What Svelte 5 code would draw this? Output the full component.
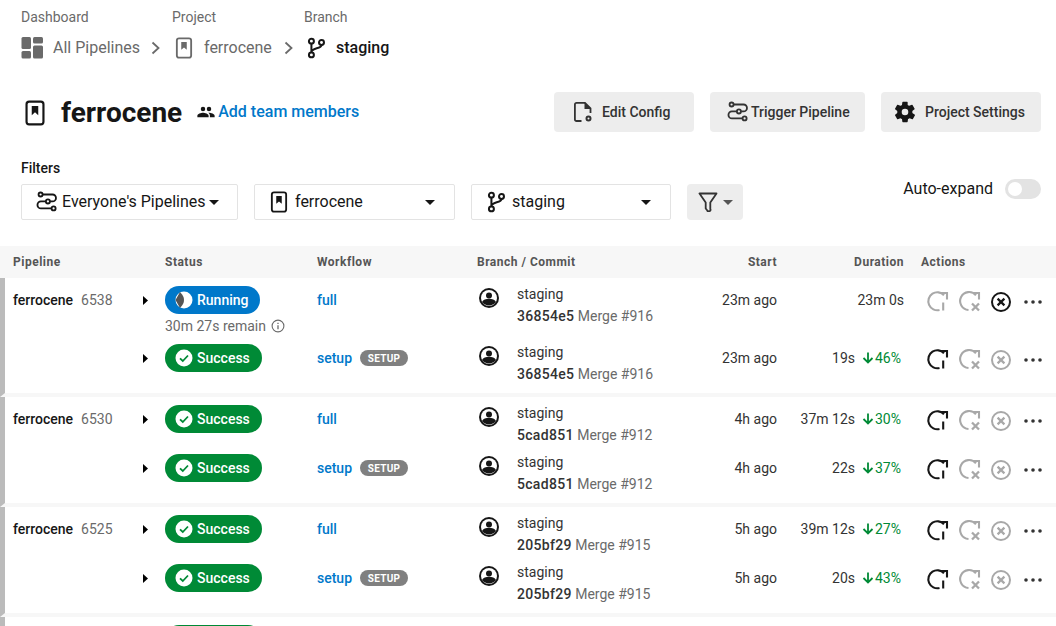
<script>
  const groups = [
    { project: 'ferrocene', num: 6538, rows: [
      { status: 'running', wf: 'full', sha: '36854e5', msg: 'Merge #916', start: '23m ago', dur: '23m 0s', pct: '', remain: '30m 27s remain' },
      { status: 'success', wf: 'setup', sha: '36854e5', msg: 'Merge #916', start: '23m ago', dur: '19s', pct: '46%' }
    ]},
    { project: 'ferrocene', num: 6530, rows: [
      { status: 'success', wf: 'full', sha: '5cad851', msg: 'Merge #912', start: '4h ago', dur: '37m 12s', pct: '30%' },
      { status: 'success', wf: 'setup', sha: '5cad851', msg: 'Merge #912', start: '4h ago', dur: '22s', pct: '37%' }
    ]},
    { project: 'ferrocene', num: 6525, rows: [
      { status: 'success', wf: 'full', sha: '205bf29', msg: 'Merge #915', start: '5h ago', dur: '39m 12s', pct: '27%' },
      { status: 'success', wf: 'setup', sha: '205bf29', msg: 'Merge #915', start: '5h ago', dur: '20s', pct: '43%' }
    ]},
    // next pipeline, only the top of its pill is in view
    { project: '', num: 0, rows: [
      { status: 'clipped', wf: '', sha: '', msg: '', start: '', dur: '', pct: '' }
    ]}
  ];
</script>

{#snippet bookmark(size, color)}
  <svg width={size} height={size} viewBox="0 0 24 24" fill="none">
    <rect x="4.2" y="1.5" width="15.6" height="21" rx="2.4" stroke={color} stroke-width="2"/>
    <path d="M9 5.5h6v8.5l-3-2.6-3 2.6z" fill={color}/>
  </svg>
{/snippet}

{#snippet branch(size, color)}
  <svg width={size} height={size} viewBox="0 0 24 24" fill="none" stroke={color} stroke-width="2.2">
    <circle cx="7" cy="4.5" r="2.7"/>
    <circle cx="7" cy="19.5" r="2.7"/>
    <circle cx="18" cy="6" r="2.7"/>
    <path d="M7 7.2v9.6M18 8.700c0 4.300-11 3-11 8"/>
  </svg>
{/snippet}

{#snippet flow(size, color)}
  <svg width={size} height={size} viewBox="0 0 24 24" fill="none" stroke={color} stroke-width="2">
    <circle cx="5" cy="3.8" r="2.2"/>
    <path d="M7.2 3.8H18a3.600 3.600 0 0 1 0 7.600h-2.600"/>
    <circle cx="13" cy="11.4" r="2.2"/>
    <path d="M10.800 11.400H5.400a3.600 3.600 0 0 0 0 7.600H17"/>
    <circle cx="19.2" cy="19" r="2.2"/>
  </svg>
{/snippet}

{#snippet caret(color)}
  <svg class="caret" width="10" height="5" viewBox="0 0 10 5"><path d="M0 0h10L5 5z" fill={color}/></svg>
{/snippet}

{#snippet rerun(color)}
  <svg width="24" height="24" viewBox="0 0 24 24" fill="none" stroke={color} stroke-width="2.100">
    <path d="M18 5.200A9 9 0 1 0 13.500 20"/>
    <path d="M15 3h6v6.500"/>
    <path d="M17.200 12.500V20.500"/>
  </svg>
{/snippet}

{#snippet rerunFailed(color)}
  <svg width="24" height="24" viewBox="0 0 24 24" fill="none" stroke={color} stroke-width="2.100">
    <path d="M18 5.200A9 9 0 1 0 10.500 20"/>
    <path d="M15 3h6v6.500"/>
    <path d="M14 13.500l7 7M21 13.500l-7 7" stroke-width="2.300"/>
  </svg>
{/snippet}

{#snippet cancel(color)}
  <svg width="22" height="22" viewBox="0 0 22 22" fill="none" stroke={color} stroke-width="2">
    <circle cx="11" cy="11" r="9"/>
    <path d="M7.600 7.600l6.800 6.800M14.400 7.600l-6.800 6.800" stroke-width="2.200"/>
  </svg>
{/snippet}

<div class="page">
  <nav class="crumbs">
    <div class="crumb c1">
      <span class="crumb-label">Dashboard</span>
      <span class="crumb-value">
        <svg width="22" height="22" viewBox="0 0 22 22" fill="#6a6a6a">
          <rect x="0.5" y="0" width="9.5" height="12" rx="1.5"/>
          <rect x="12" y="0" width="10" height="6.5" rx="1.5"/>
          <rect x="0.5" y="14" width="9.5" height="7.5" rx="1.5"/>
          <rect x="12" y="8.5" width="10" height="13" rx="1.5"/>
        </svg>
        All Pipelines
      </span>
    </div>
    <svg class="chev" width="10" height="14" viewBox="0 0 10 14" fill="none" stroke="#6a6a6a" stroke-width="1.8"><path d="M1.500 1.500l6 5.500-6 5.500"/></svg>
    <div class="crumb c2">
      <span class="crumb-label">Project</span>
      <span class="crumb-value">{@render bookmark(22, '#6a6a6a')}<span>ferrocene</span></span>
    </div>
    <svg class="chev" width="10" height="14" viewBox="0 0 10 14" fill="none" stroke="#6a6a6a" stroke-width="1.8"><path d="M1.500 1.500l6 5.500-6 5.500"/></svg>
    <div class="crumb c3">
      <span class="crumb-label">Branch</span>
      <span class="crumb-value cur">{@render branch(22, '#161616')}<span>staging</span></span>
    </div>
  </nav>

  <header class="head">
    <div class="title-box">
      {@render bookmark(26, '#161616')}
      <h1>ferrocene</h1>
      <a class="team" href="#team">
        <svg width="18" height="18" viewBox="0 0 24 24" fill="#161616"><path d="M16 11a3 3 0 1 0 0-6 3 3 0 0 0 0 6zm-8 0a3 3 0 1 0 0-6 3 3 0 0 0 0 6zm0 2c-2.600 0-7.500 1.300-7.500 3.900V19h15v-2.100C15.500 14.300 10.600 13 8 13zm8 0h-1c1.300 1 2.200 2.200 2.200 3.900V19h6.300v-2.100C23.500 14.300 18.600 13 16 13z"/></svg>
        Add team members
      </a>
    </div>
    <div class="btns">
      <button class="btn b1">
        <svg width="20" height="22" viewBox="0 0 20 22" fill="none" stroke="#333" stroke-width="1.800">
          <path d="M8.500 20H3.500A1.600 1.600 0 0 1 1.900 18.400V3.500A1.600 1.600 0 0 1 3.500 1.900H12l5.500 5.500V12"/>
          <path d="M11.500 1.500l6.500 6.500h-6.500z" fill="#333" stroke="none"/>
          <circle cx="15.500" cy="17.500" r="2" stroke-width="2"/>
        </svg>
        Edit Config
      </button>
      <button class="btn b2">{@render flow(22, '#333')}Trigger Pipeline</button>
      <button class="btn b3">
        <svg width="22" height="22" viewBox="0 0 24 24" fill="#161616"><path fill-rule="evenodd" d="M19.400 13a7.600 7.600 0 0 0 0-2l2.400-1.900a.6.600 0 0 0 .1-.7l-2.300-4a.6.600 0 0 0-.7-.2l-2.900 1.100a8 8 0 0 0-1.700-1L14.300 1.300a.6.600 0 0 0-.6-.5H9.100a.6.600 0 0 0-.6.500l-.4 3a8 8 0 0 0-1.700 1L3.500 4.200a.6.600 0 0 0-.7.200l-2.300 4a.6.600 0 0 0 .1.700L3 11a7.600 7.600 0 0 0 0 2L.6 14.900a.6.600 0 0 0-.1.700l2.300 4c.1.300.4.300.7.200l2.900-1.100a8 8 0 0 0 1.700 1l.4 3c.1.300.3.500.6.500h4.600c.3 0 .5-.2.600-.5l.4-3a8 8 0 0 0 1.700-1l2.900 1.100c.3.100.6 0 .7-.2l2.300-4a.6.600 0 0 0-.1-.7zM11.400 15.600a3.600 3.600 0 1 1 0-7.200 3.600 3.600 0 0 1 0 7.200z" transform="translate(.6 0)"/></svg>
        Project Settings
      </button>
    </div>
  </header>

  <section class="filters">
    <div>
      <div class="filter-label">Filters</div>
      <div class="selects">
        <div class="sel s1">{@render flow(22, '#161616')}<span>Everyone's Pipelines</span>{@render caret('#161616')}</div>
        <div class="sel s2">{@render bookmark(22, '#161616')}<span>ferrocene</span><i class="push"></i>{@render caret('#161616')}</div>
        <div class="sel s3">{@render branch(22, '#161616')}<span>staging</span><i class="push"></i>{@render caret('#161616')}</div>
        <div class="funnel">
          <svg width="20" height="20" viewBox="0 0 20 20" fill="none" stroke="#333" stroke-width="1.8" stroke-linejoin="round"><path d="M1.500 1.500h17L12.300 10.500v6.500a1.500 1.500 0 0 1-3 1.500L7.700 16.500v-6z"/></svg>
          {@render caret('#555')}
        </div>
      </div>
    </div>
    <div class="auto">
      <span>Auto-expand</span>
      <span class="toggle"><i></i></span>
    </div>
  </section>

  <div class="thead">
    <span>Pipeline</span><span>Status</span><span>Workflow</span><span>Branch / Commit</span>
    <span class="right">Start</span><span class="right">Duration</span><span class="act-h">Actions</span>
  </div>

  {#each groups as g}
    <div class="group">
      {#each g.rows as r, ri}
        <div class="row" class:tall={r.remain}>
          <div class="c-pipe">
            {#if ri === 0 && g.project}
              <span class="pname">{g.project}</span><span class="pnum">{g.num}</span>
            {/if}
            {#if g.project}
              <svg class="expand" width="5" height="9" viewBox="0 0 5 9"><path d="M0 0l5 4.500-5 4.500z" fill="#000"/></svg>
            {/if}
          </div>
          <div class="c-status">
            <span class="badge {r.status}">
              {#if r.status === 'running'}
                <svg width="18" height="18" viewBox="0 0 18 18"><circle cx="9" cy="9" r="8.500" fill="#fff"/><path d="M5 1L.5 9 5 17c3-3 4-5.500 4-8S8 4 5 1z" fill="#555"/></svg>
                Running
              {:else if r.status === 'success'}
                <svg width="18" height="18" viewBox="0 0 18 18"><circle cx="9" cy="9" r="8.500" fill="#fff"/><path d="M5 9.300l2.800 2.700L13 6.500" fill="none" stroke="#008a36" stroke-width="1.800"/></svg>
                Success
              {/if}
            </span>
            {#if r.remain}
              <div class="remain">{r.remain}
                <svg width="14" height="14" viewBox="0 0 14 14" fill="none" stroke="#6a6a6a" stroke-width="1.100"><circle cx="7" cy="7" r="5.900"/><path d="M7 6.200v4M7 3.700v1.300" stroke-width="1.300"/></svg>
              </div>
            {/if}
          </div>
          <div class="c-wf">
            {#if r.wf}<a class="wf" href="#wf">{r.wf}</a>{/if}
            {#if r.wf === 'setup'}<span class="tag">SETUP</span>{/if}
          </div>
          {#if r.sha}
            <div class="c-commit">
              <svg class="avatar" width="20" height="20" viewBox="0 0 20 20"><circle cx="10" cy="10" r="10" fill="#161616"/><circle cx="10" cy="10" r="8" fill="#fff"/><circle cx="10" cy="7.500" r="3" fill="#161616"/><path d="M3 14c1-2.500 4-3.200 7-3.200s6 .7 7 3.200a8.800 8.800 0 0 1-14 0z" fill="#161616"/></svg>
              <div class="commit-text">
                <div class="bname">staging</div>
                <div><span class="sha">{r.sha}</span> <span class="msg">{r.msg}</span></div>
              </div>
            </div>
            <div class="c-start">{r.start}</div>
            <div class="c-dur">
              <span>{r.dur}</span>
              {#if r.pct}
                <span class="delta">
                  <svg width="12" height="12" viewBox="0 0 12 12" fill="none" stroke="#008a36" stroke-width="1.800"><path d="M6 .5v10M1.500 6l4.500 4.500L10.500 6"/></svg>{r.pct}
                </span>
              {/if}
            </div>
            <div class="c-act">
              {@render rerun(r.status === 'running' ? '#a8a8a8' : '#161616')}
              {@render rerunFailed('#a8a8a8')}
              {@render cancel(r.status === 'running' ? '#161616' : '#a8a8a8')}
              <svg class="more" width="18" height="4" viewBox="0 0 18 4" fill="#333"><circle cx="2" cy="2" r="1.800"/><circle cx="9" cy="2" r="1.800"/><circle cx="16" cy="2" r="1.800"/></svg>
            </div>
          {/if}
        </div>
      {/each}
    </div>
  {/each}
</div>

<style>
  :global(body) {
    margin: 0;
    overflow: hidden;
    background: #fff;
  }

  .page {
    height: 626px;
    overflow: hidden;
    font-family: Roboto, "Liberation Sans", sans-serif;
    color: #161616;
    background: #fff;
  }

  .crumbs {
    display: flex;
    align-items: flex-end;
    padding: 9px 0 0 21px;
    height: 50px;
  }

  .crumb {
    display: flex;
    flex-direction: column;
    gap: 12px;
  }

  .c1 { width: 130px; }
  .c2 { width: 112px; margin-left: 11px; }
  .c3 { margin-left: 10px; }

  .c2 .crumb-value { margin-left: 1px; gap: 9px; }
  .c3 .crumb-value { margin-left: 1px; gap: 9px; }

  .crumb-label {
    font-size: 14px;
    line-height: 16px;
    color: #6a6a6a;
  }

  .crumb-value {
    display: flex;
    align-items: center;
    gap: 10px;
    font-size: 16px;
    line-height: 22px;
    color: #6a6a6a;
    white-space: nowrap;
  }

  .crumb-value.cur {
    color: #161616;
    font-weight: 500;
  }

  .chev { margin-bottom: 4px; }

  .head {
    display: flex;
    justify-content: space-between;
    align-items: center;
    padding: 33px 15px 0 21px;
    height: 40px;
  }

  .title-box {
    display: flex;
    align-items: center;
    margin: 2px 0 0 1px;
  }

  h1 {
    margin: 0 15px 0 13px;
    font-size: 28px;
    font-weight: 700;
    line-height: 40px;
  }

  .team {
    display: flex;
    align-items: center;
    gap: 3px;
    font-size: 16px;
    font-weight: 500;
    color: #0078ca;
    text-decoration: none;
    margin-top: -3px;
  }

  .btns {
    display: flex;
    gap: 16px;
  }

  .btn {
    display: flex;
    align-items: center;
    height: 40px;
    padding: 0;
    border: 0;
    border-radius: 4px;
    background: #ededed;
    font: 500 14px Roboto, sans-serif;
    color: #333;
  }

  .b1 { width: 140px; gap: 9px; padding-left: 19px; }
  .b2 { width: 155px; gap: 2px; padding-left: 17px; }
  .b3 { width: 160px; gap: 9px; padding-left: 13px; }

  .filters {
    display: flex;
    justify-content: space-between;
    padding: 28px 15px 0 21px;
  }

  .filter-label {
    font-size: 14px;
    font-weight: 500;
    line-height: 16px;
    margin-bottom: 8px;
  }

  .selects {
    display: flex;
    gap: 16px;
  }

  .sel {
    display: flex;
    align-items: center;
    box-sizing: border-box;
    height: 36px;
    padding: 0 19px 0 13px;
    gap: 5px;
    border: 1px solid #e3e3e3;
    border-radius: 2px;
    font-size: 16px;
    white-space: nowrap;
  }

  .sel span { margin-bottom: 2px; }

  .s1 { width: 217px; gap: 3px; padding: 0 16px 0 14px; }
  .s1 span { margin-left: 1px; }
  .s2 { width: 201px; }
  .s3 { width: 200px; }

  .push { flex: 1; }

  .funnel {
    display: flex;
    align-items: center;
    justify-content: center;
    gap: 5px;
    width: 56px;
    height: 36px;
    background: #ededed;
    border-radius: 4px;
  }

  .auto {
    display: flex;
    align-items: center;
    gap: 12px;
    height: 18px;
    margin-top: 19px;
    font-size: 16px;
  }

  .toggle {
    display: block;
    box-sizing: border-box;
    width: 36px;
    height: 20px;
    margin-top: 2px;
    padding: 3px;
    border-radius: 10px;
    background: #e3e3e3;
  }

  .toggle i {
    display: block;
    width: 14px;
    height: 14px;
    border-radius: 50%;
    background: #fff;
  }

  .thead, .row {
    display: grid;
    grid-template-columns: 152px 152px 160px 218px 82px 127px 152px;
    padding-left: 13px;
  }

  .thead {
    height: 32px;
    margin-top: 26px;
    align-items: center;
    background: #f7f7f7;
    font-size: 12px;
    font-weight: 700;
    letter-spacing: 0.5px;
    color: #555;
  }

  .right { text-align: right; }
  .act-h { padding-left: 17px; }

  .group {
    border-left: 5px solid #bbb;
    border-bottom: 4px solid #f7f7f7;
    padding-top: 8px;
  }

  .group .row {
    padding-left: 8px;
    height: 49px;
    font-size: 14px;
  }

  .group .row.tall { height: 58px; }

  .c-pipe {
    position: relative;
    height: 28px;
    display: flex;
    align-items: center;
    gap: 8px;
  }

  .pname {
    font-weight: 500;
    color: #161616;
  }

  .pnum { color: #6a6a6a; }

  .expand {
    position: absolute;
    left: 130px;
    top: 10px;
  }

  .badge {
    display: inline-flex;
    align-items: center;
    gap: 4px;
    height: 28px;
    padding: 0 12px 0 10px;
    box-sizing: border-box;
    border-radius: 14px;
    color: #fff;
    font-weight: 500;
    font-size: 14px;
  }

  .badge.running { background: #0078ca; }
  .badge.success { background: #008a36; }
  .badge.clipped { background: #008a36; width: 97px; }

  .remain {
    display: flex;
    align-items: center;
    gap: 5px;
    margin-top: 3px;
    line-height: 18px;
    color: #6a6a6a;
  }

  .c-wf {
    height: 28px;
    display: flex;
    align-items: center;
    gap: 8px;
  }

  .wf {
    color: #0078ca;
    font-weight: 500;
    text-decoration: none;
  }

  .tag {
    display: inline-flex;
    align-items: center;
    justify-content: center;
    box-sizing: border-box;
    height: 16px;
    width: 48px;
    border-radius: 8px;
    background: #808080;
    color: #fff;
    font-size: 10px;
    font-weight: 700;
    letter-spacing: 0.3px;
  }

  .c-commit {
    display: flex;
    gap: 18px;
    padding-left: 2px;
  }

  .avatar { margin-top: 2px; }

  .commit-text {
    margin-top: -3px;
    line-height: 22px;
    white-space: nowrap;
    font-size: 14px;
  }

  .bname { color: #333; }
  .sha { font-weight: 500; color: #333; letter-spacing: 0.3px; }
  .msg { color: #6a6a6a; }

  .c-start {
    height: 28px;
    line-height: 28px;
    text-align: right;
    color: #333;
  }

  .c-dur {
    height: 28px;
    display: flex;
    align-items: center;
    justify-content: flex-end;
    color: #333;
  }

  .delta {
    display: flex;
    align-items: center;
    justify-content: flex-end;
    gap: 1px;
    width: 46px;
    padding-right: 3px;
    color: #008a36;
  }

  .c-act {
    display: flex;
    align-items: center;
    gap: 8px;
    height: 28px;
    padding: 2px 0 0 22px;
  }

  .c-act svg { flex: none; }
  .more { margin-left: 4px; }
  .caret { flex: none; }
</style>
